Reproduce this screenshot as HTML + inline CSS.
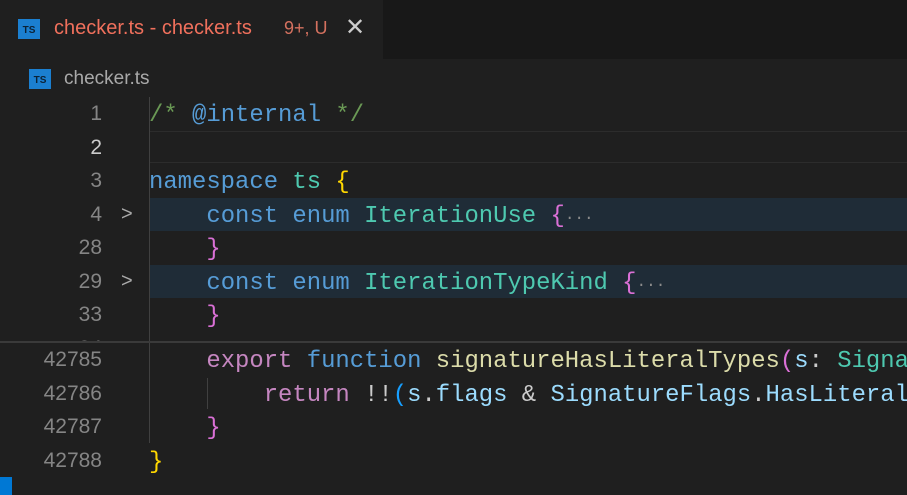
<!DOCTYPE html>
<html><head><meta charset="utf-8"><style>
body{margin:0;width:907px;height:495px;background:#1f1f1f;overflow:hidden;position:relative;font-family:"Liberation Sans",sans-serif}
.tabbar{position:absolute;left:0;top:0;width:907px;height:59px;background:#181818}
.tab{position:absolute;left:0;top:0;width:383px;height:59px;background:#1f1f1f}
.ts{position:absolute;width:22px;height:20px;background:#1b7fd0;color:#0b2236;font:bold 10px "Liberation Sans",sans-serif;text-align:center;line-height:24px}
.t1{position:absolute;left:54px;top:17px;font-size:20px;color:#f0705c}
.t2{position:absolute;left:284px;top:18px;font-size:18px;color:#d4715f}
.x{position:absolute;left:345px;top:13px;font-size:24px;color:#ccc}
.bc{position:absolute;left:64px;top:68px;font-size:19px;color:#a9a9a9}
.ln{position:absolute;left:0;width:102px;text-align:right;color:#858585;font:21px/33.5px "Liberation Sans",sans-serif}
.row{position:absolute;left:149px;height:33.5px;font:23.9px/33.5px "Liberation Mono",monospace;white-space:pre;color:#ccc;padding-top:2px;box-sizing:border-box}
.hl{background:#1f2c37}
.k{color:#569cd6}.c{color:#6a9955}.t{color:#4ec9b0}.y{color:#ffd700}.p{color:#da70d6}.m{color:#c586c0}.f{color:#dcdcaa}.v{color:#9cdcfe}.b{color:#179fff}.d{color:#8b8b8b;font-size:16px}
.chev{position:absolute;left:121px;color:#aaa;font:20px/33.5px "Liberation Sans",sans-serif}
</style></head><body>
<div class="tabbar"><div class="tab">
<div class="ts" style="left:18px;top:19px">TS</div>
<div class="t1">checker.ts - checker.ts</div>
<div class="t2">9+, U</div>
<div class="x">✕</div>
</div></div>
<div class="ts" style="left:29px;top:69px">TS</div>
<div class="bc">checker.ts</div>

<div style="position:absolute;left:0;top:97px;width:907px;height:245px;overflow:hidden">
<div class="ln" style="top:0">1</div>
<div class="ln" style="top:33.5px;color:#ccc">2</div>
<div class="ln" style="top:67px">3</div>
<div class="ln" style="top:100.5px">4</div>
<div class="ln" style="top:134px">28</div>
<div class="ln" style="top:167.5px">29</div>
<div class="ln" style="top:201px">33</div>
<div class="ln" style="top:234.5px">34</div>
<div class="chev" style="top:100.5px">&gt;</div>
<div class="chev" style="top:167.5px">&gt;</div>
<div class="row" style="top:0"><span class="c">/* </span><span class="k">@internal</span><span class="c"> */</span></div>
<div class="row" style="top:34px;width:760px;height:32px;border:1px solid #2c2c2c"></div>
<div class="row" style="top:67px"><span class="k">namespace</span> <span class="t">ts</span> <span class="y">{</span></div>
<div class="row hl" style="top:100.5px;width:760px">    <span class="k">const</span> <span class="k">enum</span> <span class="t">IterationUse</span> <span class="p">{</span><span class="d">···</span></div>
<div class="row" style="top:134px">    <span class="p">}</span></div>
<div class="row hl" style="top:167.5px;width:760px">    <span class="k">const</span> <span class="k">enum</span> <span class="t">IterationTypeKind</span> <span class="p">{</span><span class="d">···</span></div>
<div class="row" style="top:201px">    <span class="p">}</span></div>
<div style="position:absolute;left:149px;top:0;width:1px;height:245px;background:#404040"></div>
</div>
<div style="position:absolute;left:0;top:341px;width:907px;height:2px;background:#3a3a3a"></div>
<div style="position:absolute;left:0;top:343px;width:907px;height:152px;overflow:hidden">
<div class="ln" style="top:0">42785</div>
<div class="ln" style="top:33.5px">42786</div>
<div class="ln" style="top:67px">42787</div>
<div class="ln" style="top:100.5px">42788</div>
<div style="position:absolute;left:149px;top:0;width:1px;height:100px;background:#404040"></div>
<div style="position:absolute;left:207px;top:35px;width:1px;height:31px;background:#404040"></div>
<div class="row" style="top:0">    <span class="m">export</span> <span class="k">function</span> <span class="f">signatureHasLiteralTypes</span><span class="p">(</span><span class="v">s</span>: <span class="t">Signature</span></div>
<div class="row" style="top:33.5px">        <span class="m">return</span> !!<span class="b">(</span><span class="v">s</span>.<span class="v">flags</span> &amp; <span class="v">SignatureFlags</span>.<span class="v">HasLiteralTypes</span></div>
<div class="row" style="top:67px">    <span class="p">}</span></div>
<div class="row" style="top:100.5px"><span class="y">}</span></div>
</div>
<div style="position:absolute;left:0;top:477px;width:12px;height:18px;background:#0078d4"></div>
</body></html>
